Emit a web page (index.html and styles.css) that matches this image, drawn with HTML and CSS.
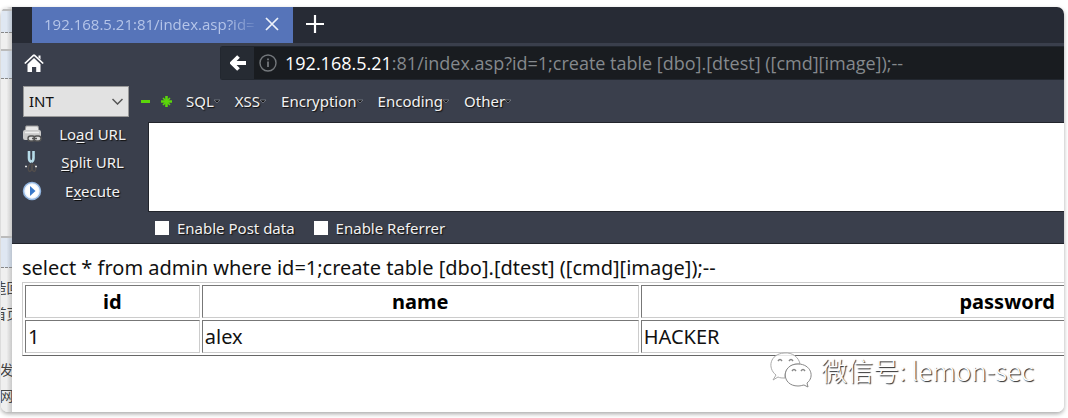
FILE: index.html
```html
<!DOCTYPE html>
<html lang="en">
<head>
<meta charset="utf-8">
<title>192.168.5.21:81/index.asp</title>
<link rel="stylesheet" href="styles.css">
</head>
<body>
<div class="frame">
  <aside class="behind" lang="zh">
    <div class="band band-top"></div>
    <div class="band band-mid"></div>
    <div class="band band-low"></div>
    <p class="scrap">造回</p>
    <p class="scrap scrap-gap">首页</p>
    <p class="scrap">发</p>
    <p class="scrap">网</p>
  </aside>
  <main class="browser">
    <div class="tabs">
      <div class="tab">
        <span class="tab-title">192.168.5.21:81/index.asp?id=</span>
        <button class="icon-button" aria-label="Close tab"><svg width="14" height="14" viewBox="0 0 14 14"><path d="M1 1l12 12M13 1L1 13" stroke="#eef2fb" stroke-width="1.7"/></svg></button>
      </div>
      <button class="icon-button new-tab" aria-label="New tab"><svg width="18" height="18" viewBox="0 0 18 18"><path d="M9 0v18M0 9h18" stroke="#fff" stroke-width="2.2"/></svg></button>
    </div>
    <div class="nav">
      <button class="icon-button home" aria-label="Home"><svg width="20" height="19" viewBox="0 0 20 19"><path d="M10 .8L.8 9.500M10 .8l9.200 8.700" stroke="#fff" stroke-width="1.700"/><path d="M14.500 1.500h2v4l-2-2z" fill="#fff"/><path d="M3.500 10.200L10 4l6.500 6.200V18h-4.300v-5H8v5H3.500z" fill="#fff"/></svg></button>
      <div class="address">
        <button class="icon-button back" aria-label="Back"><svg width="16" height="16" viewBox="0 0 16 16"><path d="M8.500 1.500L2 8l6.500 6.500M3 8h13" fill="none" stroke="#fff" stroke-width="3.800"/></svg></button>
        <svg class="info" width="18" height="18" viewBox="0 0 18 18"><circle cx="9" cy="9" r="8" fill="none" stroke="#73777b" stroke-width="1.400"/><path d="M9 7.500V13M9 4.500v1.800" stroke="#73777b" stroke-width="1.800"/></svg>
        <span class="url"><b>192.168.5.21</b>:81/index.asp?id=1;create table [dbo].[dtest] ([cmd][image]);--</span>
      </div>
    </div>
    <div class="menus">
      <select class="type" aria-label="Injection type"><option>INT</option></select>
      <button class="icon-button" aria-label="Remove"><svg width="11" height="11" viewBox="0 0 11 11"><path d="M1 5.500h9" stroke="#5bd60a" stroke-width="3"/></svg></button>
      <button class="icon-button star" aria-label="Add"><svg width="11" height="11" viewBox="0 0 11 11"><path d="M5.500 0v11M0 5.500h11" stroke="#5bd60a" stroke-width="2.600"/><path d="M2 2l7 7M9 2l-7 7" stroke="#5bd60a" stroke-width="1.600"/></svg></button>
      <button class="menu">SQL<svg width="6" height="5" viewBox="0 0 6 5"><path d="M0 1h6L3 4z" fill="#111" stroke="#858993" stroke-width=".7"/></svg></button>
      <button class="menu">XSS<svg width="6" height="5" viewBox="0 0 6 5"><path d="M0 1h6L3 4z" fill="#111" stroke="#858993" stroke-width=".7"/></svg></button>
      <button class="menu">Encryption<svg width="6" height="5" viewBox="0 0 6 5"><path d="M0 1h6L3 4z" fill="#111" stroke="#858993" stroke-width=".7"/></svg></button>
      <button class="menu">Encoding<svg width="6" height="5" viewBox="0 0 6 5"><path d="M0 1h6L3 4z" fill="#111" stroke="#858993" stroke-width=".7"/></svg></button>
      <button class="menu">Other<svg width="6" height="5" viewBox="0 0 6 5"><path d="M0 1h6L3 4z" fill="#111" stroke="#858993" stroke-width=".7"/></svg></button>
    </div>
    <div class="editor">
      <div class="actions">
        <button class="action"><svg width="20" height="18" viewBox="0 0 20 18"><path d="M4 1h12l1 5H3z" fill="#e7e7e7" stroke="#999"/><path d="M1 7q0-2 2-2h14q2 0 2 2v6q0 2-2 2H3q-2 0-2-2z" fill="#c9c9c9"/><path d="M3 7.500h14" stroke="#eee" stroke-width="1.500"/><g fill="#ddd" stroke="#555" stroke-width="1.400"><rect x="6" y="11" width="7" height="5" rx="2.500"/><rect x="12" y="11" width="7" height="5" rx="2.500"/></g><path d="M10 13.500h5" stroke="#555" stroke-width="1.500"/></svg><span>Lo<u>a</u>d URL</span></button>
        <button class="action"><svg width="20" height="22" viewBox="0 0 20 22"><path d="M7 0v7q0 3 2.200 4M11.500 0v7q0 3-2.200 4" fill="none" stroke="#b7dce9" stroke-width="2.600"/><path d="M8.500 13q-3 2-2 6 1 3 3 0v-5q1-2 1 0v5q2 3 3 0 1-4-2-6" fill="none" stroke="#514d4c" stroke-width="1.400"/><path d="M3 15.500h2M13 15.500h2" stroke="#ddd" stroke-width="1.300"/></svg><span><u>S</u>plit URL</span></button>
        <button class="action"><svg width="20" height="20" viewBox="0 0 20 20"><circle cx="10" cy="10" r="8.500" fill="#edf5ff" stroke="#91b5e0" stroke-width="1.500"/><circle cx="10" cy="10" r="6.500" fill="#fff"/><path d="M8 5l5.500 5L8 15z" fill="#3979cb"/></svg><span>E<u>x</u>ecute</span></button>
      </div>
      <textarea class="query" aria-label="URL"></textarea>
    </div>
    <div class="options">
      <label class="option"><input type="checkbox">Enable Post data</label>
      <label class="option"><input type="checkbox">Enable Referrer</label>
    </div>
    <div class="page">
      <p class="statement">select * from admin where id=1;create table [dbo].[dtest] ([cmd][image]);--</p>
      <table class="results">
        <thead><tr><th class="col-id">id</th><th class="col-name">name</th><th>password</th></tr></thead>
        <tbody><tr><td>1</td><td>alex</td><td>HACKER</td></tr></tbody>
      </table>
    </div>
  </main>
  <div class="watermark" lang="zh">
    <svg width="42" height="36" viewBox="0 0 42 36" fill="#fff" fill-opacity=".85" stroke="#888" stroke-width="1"><path stroke="#aaa" d="M6 23C-3 16 0 2 14 1c9-1 15 5 16 11-9-1-16 5-15 14-3 0-5 0-7-1l-5 3z"/><path d="M28 12c-17 0-17 22 0 22 3 0 5-1 6-1l4 2-1-4c8-6 4-19-9-19z"/><path d="M8 9q2-3 4 0M19 9q2-3 4 0M22 19q2-3 4 0M31 19q2-3 4 0" fill="none" stroke-width="1.400"/></svg>
    <span>微信号: lemon-sec</span>
  </div>
</div>
</body>
</html>
```
FILE: styles.css
```css
* { box-sizing: border-box; }
body {
  margin: 0;
  padding: 7px 4px 6px 1px;
  min-height: 100vh;
  display: flex;
  background: #fff;
  font-family: "Noto Sans", "Noto Sans CJK SC", sans-serif;
}
p { margin: 0; }
button, select, textarea { font: inherit; }
.frame {
  position: relative;
  flex: 1;
  min-width: 0;
  display: flex;
  overflow: hidden;
  border-radius: 7px;
  box-shadow: 0 2px 4px #aaa;
}
.behind {
  width: 11px;
  flex: none;
  overflow: hidden;
  background: linear-gradient(90deg, #efefef 50%, #c9c9c9);
  color: #444;
  font-size: 14px;
}
.band {
  height: 30px;
  border-top: 2px solid #bbb;
  border-bottom: 1px dashed #888;
  background: linear-gradient(90deg, #dfe7f2 50%, #bcc5d1);
}
.band-top { height: 24px; margin-top: 2px; }
.band-mid { margin-top: 16px; }
.band-low { margin-top: 157px; height: 32px; }
.scrap {
  display: flex;
  justify-content: center;
  white-space: nowrap;
  line-height: 26px;
}
.band-low + .scrap { margin-top: 7px; }
.scrap-gap { margin-bottom: 30px; }
.browser {
  flex: 1;
  min-width: 0;
  overflow: hidden;
  background: #fff;
}
.icon-button {
  display: flex;
  align-items: center;
  justify-content: center;
  padding: 0;
  border: 0;
  background: none;
}
.tabs {
  display: flex;
  height: 36px;
  padding-left: 20px;
  background: #272b35;
}
.tab {
  display: flex;
  align-items: center;
  justify-content: space-between;
  width: 261px;
  padding: 0 14px 2px 12px;
  background: #5674b9;
}
.tab-title {
  width: 216px;
  overflow: hidden;
  white-space: nowrap;
  font-family: "Open Sans", sans-serif;
  font-size: 15px;
  color: #b5c5e9;
  mask-image: linear-gradient(90deg, #000 85%, transparent);
}
.new-tab { margin-left: 13px; }
.new-tab svg { margin-bottom: 2px; }
.nav {
  display: flex;
  align-items: center;
  height: 37px;
  padding: 3px 0 0 12px;
  background: #3a3f4c;
}
.address {
  display: flex;
  align-items: center;
  flex: 1;
  height: 34px;
  margin-left: 176px;
  background: #191c20;
  border: 1px solid #22272f;
  border-right: 0;
  border-radius: 3px 0 0 3px;
}
.back { width: 33px; height: 32px; background: #262b33; }
.info { margin: 0 8px 0 5px; }
.url {
  font-family: "Open Sans", sans-serif;
  font-size: 18px;
  white-space: nowrap;
  color: #85898d;
}
.url b { font-weight: 400; color: #fff; }
.menus {
  display: flex;
  align-items: center;
  height: 42px;
  padding-left: 11px;
  background: #3a3f4c;
}
.type {
  width: 106px;
  height: 31px;
  margin-right: 11px;
  padding: 0 5px;
  appearance: none;
  border: 1px solid #999;
  border-radius: 0;
  background: #e2e2e2 url("data:image/svg+xml,%3Csvg xmlns='http://www.w3.org/2000/svg' width='11' height='7'%3E%3Cpath d='M.5 1l5 5 5-5' fill='none' stroke='%23555' stroke-width='1.500'/%3E%3C/svg%3E") no-repeat right 5px center;
  color: #111;
  font-size: 15px;
}
.star { margin: 0 14px 0 10px; }
.menu {
  display: flex;
  align-items: center;
  margin-right: 15px;
  padding: 0;
  border: 0;
  background: none;
  color: #f2f2f2;
  font-size: 15px;
  text-shadow: 1px 1px 1px #111;
}
.editor { display: flex; background: #3a3f4c; }
.actions {
  width: 136px;
  display: flex;
  flex-direction: column;
}
.action {
  display: flex;
  align-items: center;
  height: 29px;
  padding: 0 10px;
  border: 0;
  background: none;
  color: #f2f2f2;
  font-size: 15px;
  line-height: 20px;
  text-shadow: 1px 1px 1px #111;
}
.action:first-child { height: 23px; }
.action:nth-child(2) { height: 34px; }
.action:last-child { height: 24px; }
.action span { flex: 1; padding-left: 5px; }
.action u { text-underline-offset: 2px; }
.query {
  flex: 1;
  height: 90px;
  border: 1px solid #22252c;
  border-right: 0;
  background: #fff;
  resize: none;
}
.options {
  display: flex;
  align-items: center;
  gap: 19px;
  height: 32px;
  padding-left: 143px;
  border-bottom: 1px solid #22252c;
  background: #3a3f4c;
}
.option {
  display: flex;
  align-items: center;
  gap: 8px;
  color: #f2f2f2;
  font-size: 15px;
  text-shadow: 1px 1px 1px #111;
}
.option input {
  width: 14px;
  height: 14px;
  margin: 0;
  appearance: none;
  background: #fff;
}
.page { padding: 10px 0 0 10px; font-size: 20px; color: #111; }
.statement { line-height: 28px; white-space: nowrap; }
.results {
  width: 130%;
  table-layout: fixed;
  border: 1px solid;
  border-color: #ccc #666 #666 #ccc;
  border-spacing: 2px;
}
.results th, .results td {
  height: 33px;
  padding: 0 2px;
  border: 1px solid;
  border-color: #777 #ccc #ccc #777;
  line-height: 28px;
}
.results th { color: #000; }
.col-id { width: 13%; }
.col-name { width: 32.5%; }
.watermark {
  position: absolute;
  right: 30px;
  bottom: 24px;
  display: flex;
  align-items: center;
  gap: 9px;
  color: #fff;
  font-family: "Noto Sans CJK SC", sans-serif;
  font-size: 26px;
  font-weight: 300;
  line-height: 36px;
  text-shadow: 1px 1px 1px #222;
}
```
